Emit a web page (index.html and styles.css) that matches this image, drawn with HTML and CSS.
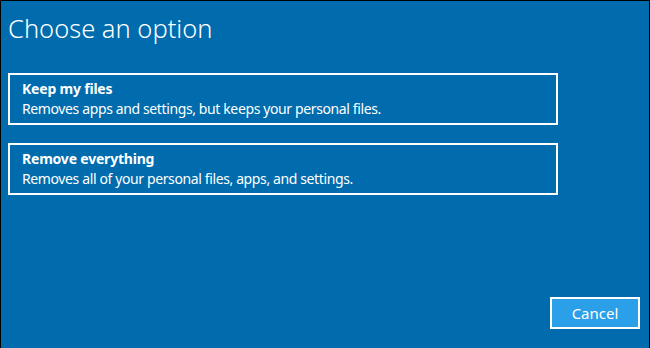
FILE: index.html
```html
<!DOCTYPE html>
<html lang="en">
<head>
    <meta charset="UTF-8">
    <meta name="viewport" content="width=device-width, initial-scale=1.0">
    <title>Choose an option</title>
    <link rel="stylesheet" href="styles.css">
</head>
<body>

    <div class="screen">
        <h1 class="title">Choose an option</h1>

        <div class="options">
            <button class="option">
                <span class="option-name">Keep my files</span>
                <span class="option-desc">Removes apps and settings, but keeps your personal files.</span>
            </button>
            <button class="option">
                <span class="option-name">Remove everything</span>
                <span class="option-desc">Removes all of your personal files, apps, and settings.</span>
            </button>
        </div>

        <div class="actions">
            <button class="cancel-btn">Cancel</button>
        </div>
    </div>

</body>
</html>
```

FILE: styles.css
```css
html, body { margin: 0; padding: 0; }
body { font-family: "Noto Sans", "Open Sans", Arial, sans-serif; background-color: #006cae; color: white; }
.screen { box-sizing: border-box; width: 650px; height: 348px; border: 1px solid #000; border-bottom: none; padding: 11px 9px 0 7px; display: flex; flex-direction: column; }
.title { margin: 0; font-size: 25.5px; font-weight: 300; line-height: 33px; letter-spacing: 0; }
.options { margin-top: 28px; display: flex; flex-direction: column; gap: 18px; }
.option { box-sizing: border-box; width: 550px; height: 52px; background: transparent; border: 2px solid white; color: white; font-family: inherit; text-align: left; padding: 5px 12px 0; display: flex; flex-direction: column; cursor: pointer; }
.option-name { font-size: 14px; font-weight: 700; line-height: 18px; letter-spacing: -0.2px; }
.option-desc { font-size: 14px; line-height: 21px; letter-spacing: -0.38px; }
.actions { margin-top: auto; margin-bottom: 19px; display: flex; justify-content: flex-end; }
.cancel-btn { box-sizing: border-box; width: 90px; height: 32px; background-color: #2b9fe8; border: 2px solid white; color: white; font-family: inherit; font-size: 15px; cursor: pointer; }
```
